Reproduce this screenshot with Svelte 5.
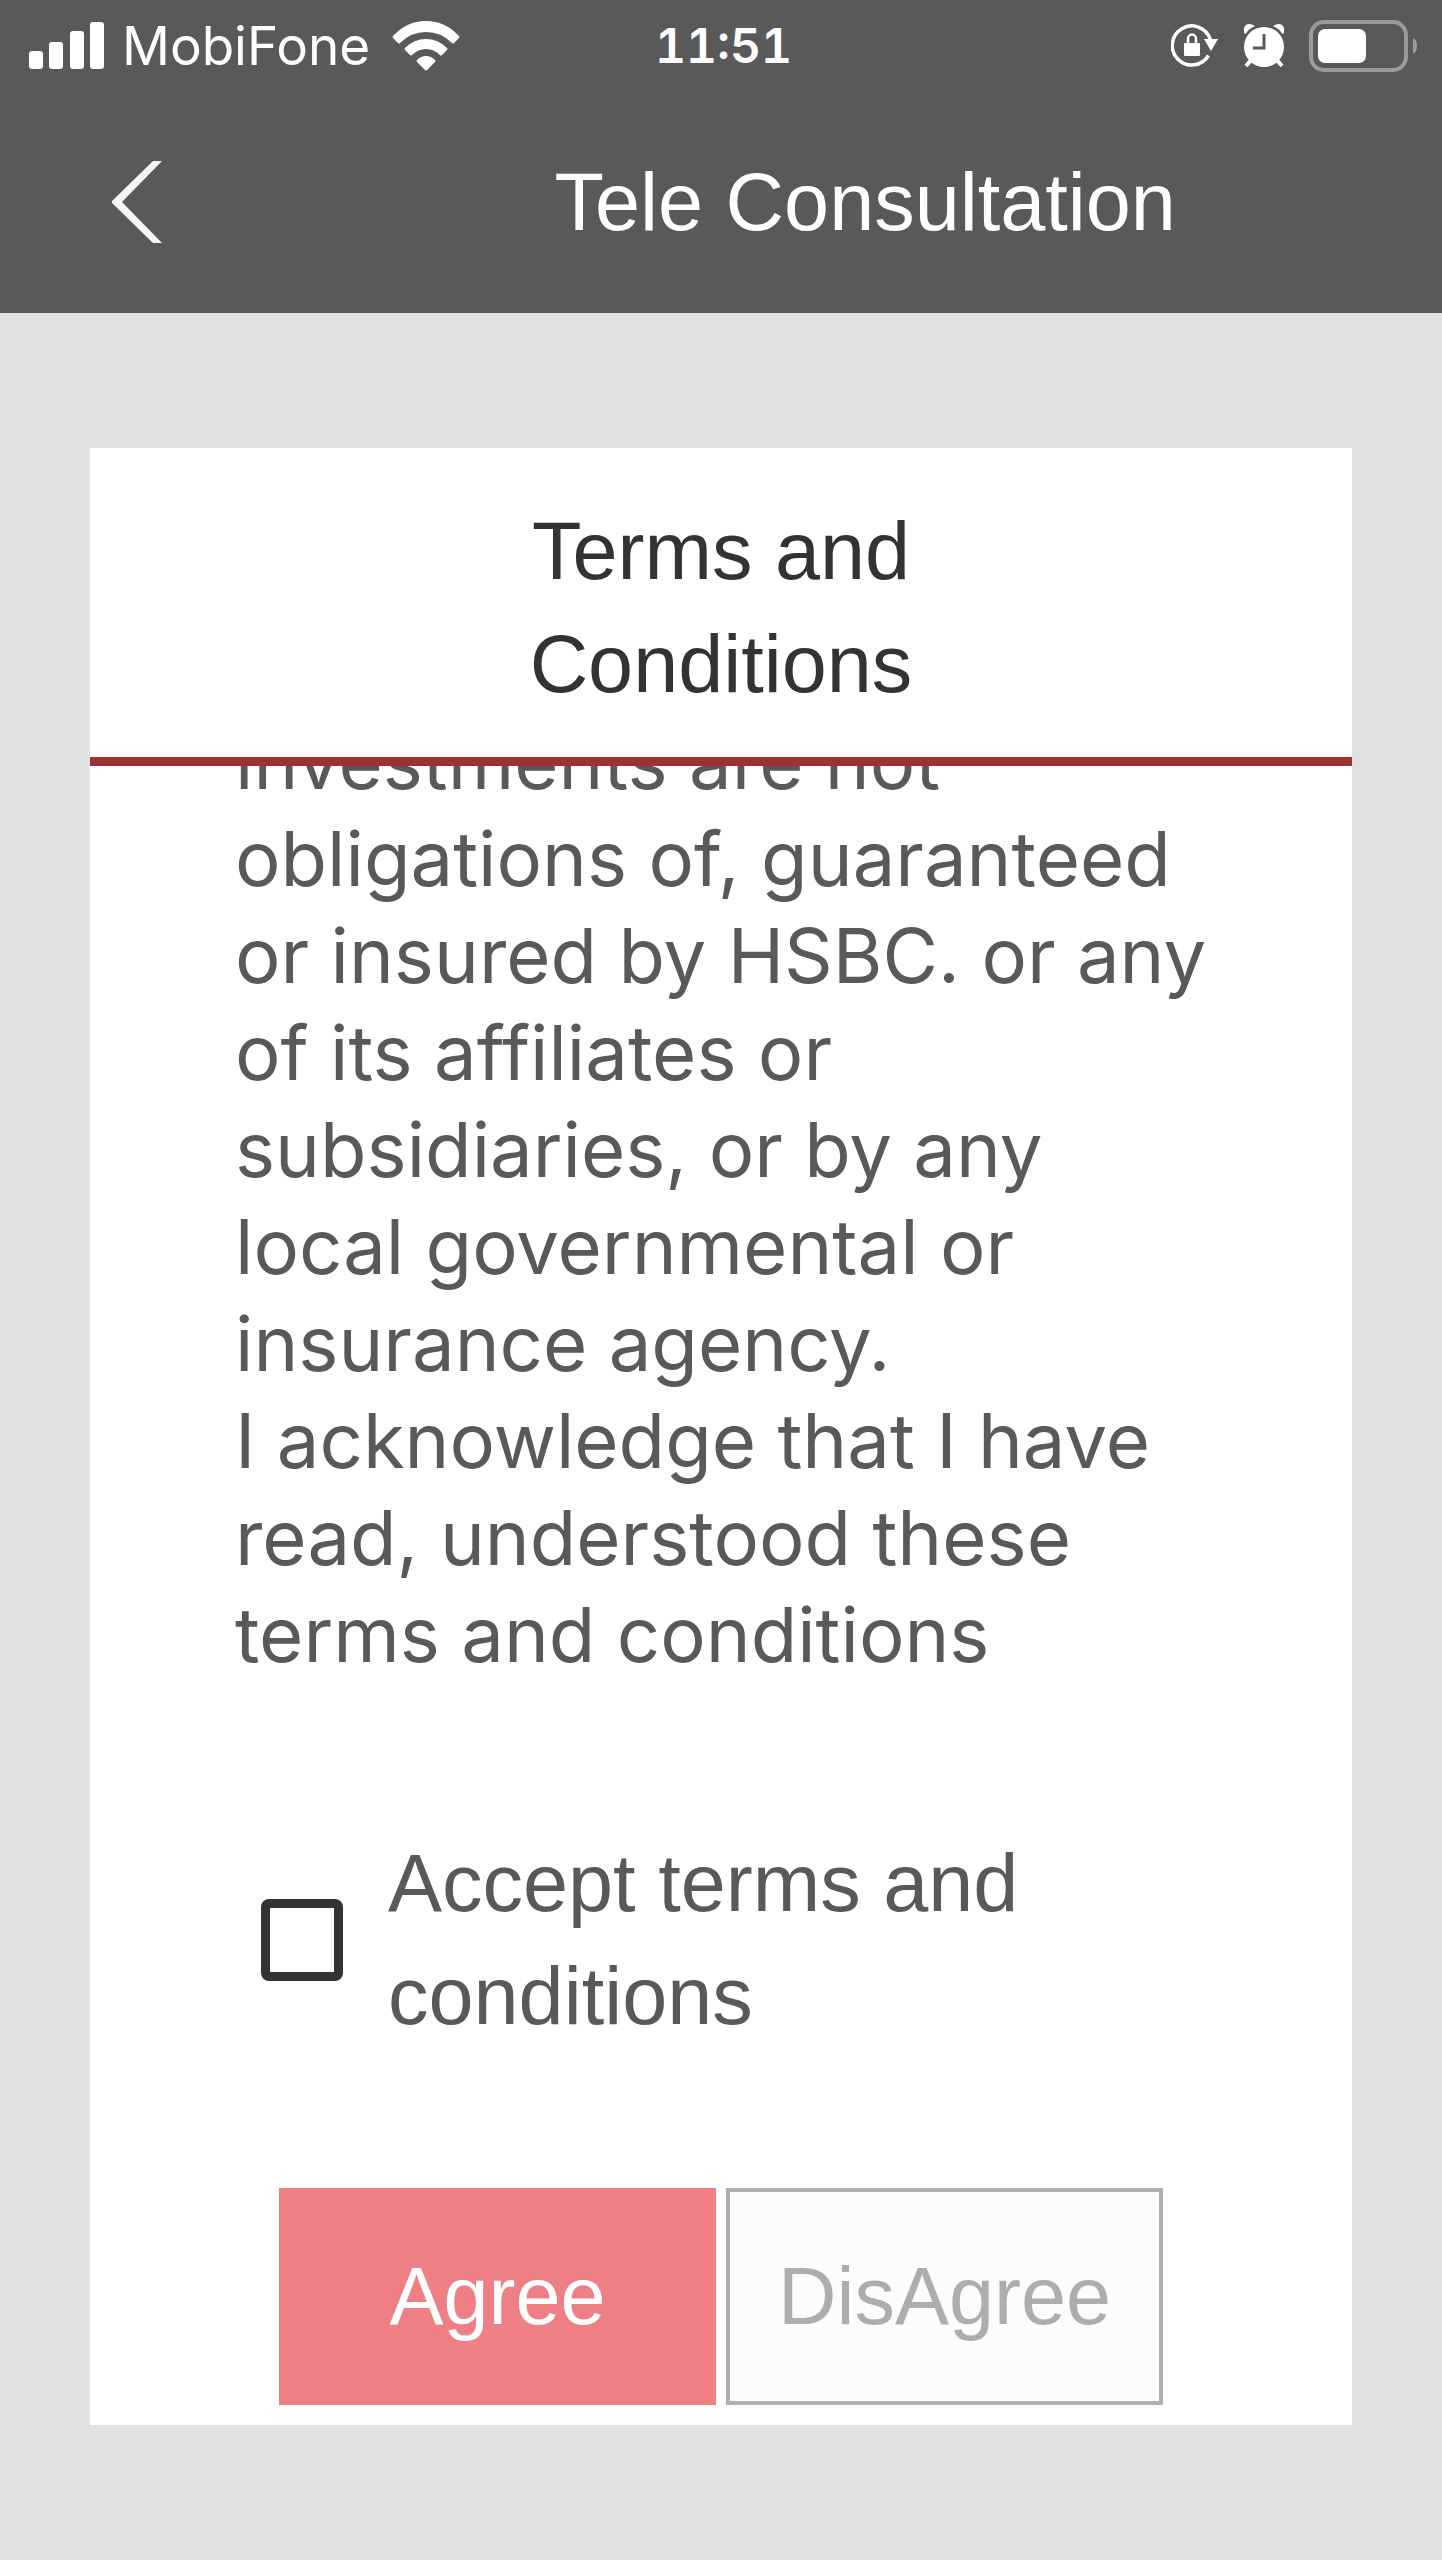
<script lang="ts">
  let accepted = $state(false);

  const terms = [
    'investments are not',
    'obligations of, guaranteed',
    'or insured by HSBC. or any',
    'of its affiliates or',
    'subsidiaries, or by any',
    'local governmental or',
    'insurance agency.',
    'I acknowledge that I have',
    'read, understood these',
    'terms and conditions',
  ];
</script>

<div class="screen">
  <header>
    <div class="status">
      <div class="left">
        <svg class="signal" width="75" height="48" viewBox="0 0 75 48" fill="#fff" aria-hidden="true">
          <rect x="0" y="29" width="14" height="18" rx="3" />
          <rect x="20" y="20" width="14" height="27" rx="3" />
          <rect x="41" y="9" width="14" height="38" rx="3" />
          <rect x="61" y="0" width="14" height="47" rx="3" />
        </svg>
        <span class="carrier">MobiFone</span>
        <svg class="wifi" width="68" height="50" viewBox="0 0 68 50" fill="#fff" aria-hidden="true">
          <path d="M1 15Q15 0 34 0T67 15Q68 16 67 17L62 22Q61 23 60 22Q49 11 34 11T8 22Q7 23 6 22L1 17Q0 16 1 15Z" />
          <path d="M13 27Q22 18 34 18T55 27Q56 28 55 29L50 34Q49 35 48 34Q42 28 34 28T20 34Q19 35 18 34L13 29Q12 28 13 27Z" />
          <path d="M25 39Q29 35 34 35T43 39Q44 40 43 41L35 49Q34 50 33 49L25 41Q24 40 25 39Z" />
        </svg>
      </div>
      <time>11:51</time>
      <div class="right">
        <svg width="48" height="44" viewBox="0 0 48 44" aria-hidden="true">
          <path d="M39.500 16A19.500 19.500 0 1 0 37.500 31.500" fill="none" stroke="#fff" stroke-width="3.500" />
          <path d="M33 15H47L40 27Z" fill="#fff" />
          <rect x="13" y="19" width="16" height="13" rx="1" fill="#fff" />
          <path d="M17 20V15A4 4.500 0 0 1 25 15V20" fill="none" stroke="#fff" stroke-width="2.500" />
        </svg>
        <svg width="42" height="46" viewBox="0 0 42 46" aria-hidden="true">
          <g fill="none" stroke="#fff" stroke-width="4">
            <path d="M9 36L3 43M33 36L39 43" />
          </g>
          <path d="M1 10Q0 1 6 1Q9 1 12 3Q5 6 3 11ZM41 10Q42 1 36 1Q33 1 30 3Q37 6 39 11Z" fill="#fff" />
          <circle cx="21" cy="24" r="20" fill="#fff" />
          <path d="M21 11V25H10" fill="none" stroke="#595959" stroke-width="3" />
        </svg>
        <svg class="battery" width="109" height="52" viewBox="0 0 109 52" aria-hidden="true">
          <rect x="2" y="2" width="95" height="48" rx="13" fill="none" stroke="#9b9b9b" stroke-width="4" />
          <rect x="9" y="9" width="48" height="34" rx="7" fill="#fff" />
          <path d="M104 18Q108 20 108 26T104 34Z" fill="#9b9b9b" />
        </svg>
      </div>
    </div>
    <div class="nav">
      <button class="back" aria-label="Back">
        <svg width="50" height="82" viewBox="0 0 50 82" aria-hidden="true">
          <path d="M41 0H50L10 41L50 82H41L0 42V40Z" fill="#f5f5f5" />
        </svg>
      </button>
      <h1>Tele Consultation</h1>
    </div>
  </header>

  <main>
    <h2>Terms and<br />Conditions</h2>
    <div class="terms">
      <p>
        {#each terms as line}
          {line}<br />
        {/each}
      </p>
    </div>
    <label class="accept">
      <input type="checkbox" bind:checked={accepted} />
      <span>Accept terms and conditions</span>
    </label>
    <div class="actions">
      <button class="agree">Agree</button>
      <button class="disagree">DisAgree</button>
    </div>
  </main>
</div>

<style>
  :global(body) {
    margin: 0;
    background: #e2e2e2;
  }
  .screen {
    min-height: 100vh;
    background: #e2e2e2;
    font-family: 'Liberation Sans', Arial, sans-serif;
    font-size: 81px;
    line-height: 113px;
    color: #595959;
  }
  header {
    background: #595959;
    color: #fff;
  }
  .status {
    display: grid;
    grid-template-columns: 1fr auto 1fr;
    align-items: center;
    height: 91px;
    padding: 0 24px 0 29px;
    font-family: Inter, sans-serif;
    font-size: 53px;
    line-height: 60px;
  }
  .left,
  .right {
    display: flex;
    align-items: center;
  }
  .carrier {
    margin: 0 22px 0 18px;
  }
  .right {
    justify-content: flex-end;
    gap: 24px;
  }
  time {
    font-size: 48px;
    font-weight: 600;
    font-variant-numeric: tabular-nums;
  }
  .nav {
    display: grid;
    grid-template-columns: 20% 80%;
    align-items: center;
    height: 222px;
  }
  button {
    font: inherit;
    cursor: pointer;
  }
  .back {
    justify-self: start;
    display: flex;
    padding: 0 16px;
    margin-left: 96px;
    border: 0;
    background: none;
  }
  h1,
  h2 {
    margin: 0;
    font-size: inherit;
    font-weight: 400;
    text-align: center;
  }
  main {
    margin: 135px 90px 0;
    padding-bottom: 20px;
    background: #fff;
  }
  h2 {
    padding: 47px 0 36px;
    border-bottom: 9px solid #9b3236;
    color: #333;
  }
  .terms {
    display: flex;
    flex-direction: column;
    justify-content: flex-end;
    height: 917px;
    padding: 0 120px 0 145px;
    overflow: hidden;
    font-family: Inter, sans-serif;
    font-size: 76px;
    line-height: 97px;
  }
  p {
    margin: 0;
    white-space: nowrap;
  }
  .accept {
    display: flex;
    align-items: center;
    gap: 45px;
    margin: 144px 200px 135px 171px;
  }
  input {
    appearance: none;
    flex: none;
    width: 82px;
    height: 82px;
    margin: 0;
    border: 9px solid #333;
    border-radius: 8px;
    background: #fff;
  }
  input:checked {
    background: #333;
  }
  .actions {
    display: grid;
    grid-template-columns: 1fr 1fr;
    gap: 10px;
    padding: 0 189px;
  }
  .actions button {
    height: 217px;
    padding: 0;
    border: 4px solid #ed7f85;
    border-radius: 0;
  }
  .agree {
    background: #ed7f85;
    color: #fff;
  }
  .actions .disagree {
    border-color: #b0b0b0;
    background: #fcfcfc;
    color: #adadad;
  }
</style>
